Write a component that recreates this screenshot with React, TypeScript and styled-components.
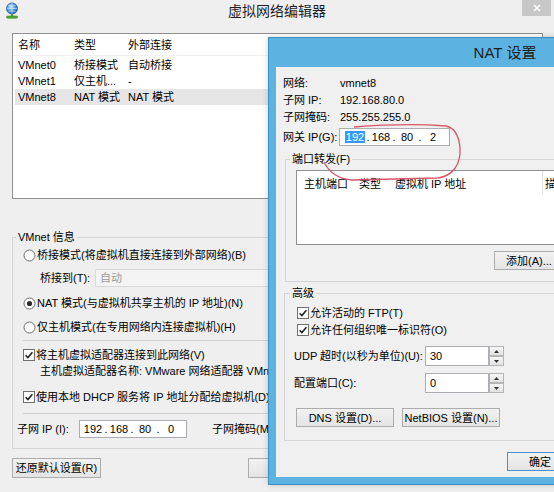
import React from "react";
import styled, { createGlobalStyle } from "styled-components";

const GlobalStyle = createGlobalStyle`
  html, body { margin: 0; padding: 0; background: #efefef; }
  body {
    font-family: "Liberation Sans", "Noto Sans CJK SC", sans-serif;
    font-size: 11px;
    color: #000;
  }
  * { box-sizing: border-box; }
`;

const Screen = styled.div`
  position: relative;
  width: 554px;
  height: 492px;
  overflow: hidden;
  background: #efefef;
`;

/* ---------- main window ---------- */
const MainWindow = styled.div`
  display: flex;
  flex-direction: column;
  height: 100%;
`;

const TitleBar = styled.div`
  height: 24px;
  display: grid;
  grid-template-columns: 1fr auto 1fr;
  align-items: start;
`;

const AppIcon = styled.svg`
  margin: 2px 0 0 4px;
`;

const TitleText = styled.div<{ $size: number }>`
  font-size: ${(p) => p.$size}px;
  line-height: 22px;
  color: #1e1e1e;
  white-space: nowrap;
`;

const CloseButton = styled.div`
  justify-self: end;
  margin-right: 3px;
  width: 29px;
  height: 16px;
  background: #c7c7c7;
  display: flex;
  align-items: center;
  justify-content: center;
`;

const Client = styled.div`
  display: flex;
  flex-direction: column;
  padding: 9px 11px 0 12px;
`;

const ListBox = styled.div`
  height: 166px;
  flex: none;
  background: #fff;
  border: 1px solid #8f9090;
  display: flex;
  flex-direction: column;
`;

const ListHeader = styled.div`
  display: flex;
  height: 22px;
  flex: none;
  align-items: center;
  padding: 1px 0 0 5px;
  border-bottom: 1px solid #f0f0f0;
`;

const ListRows = styled.div`
  padding-top: 1px;
  display: flex;
  flex-direction: column;
`;

const ListRow = styled.div<{ $selected?: boolean }>`
  display: flex;
  height: 16px;
  align-items: center;
  margin-left: 2px;
  padding: 1px 0 0 3px;
  background: ${(p) => (p.$selected ? "#e6e6e6" : "transparent")};
`;

const Cell = styled.div<{ $w?: number }>`
  width: ${(p) => (p.$w ? `${p.$w}px` : "auto")};
  flex: ${(p) => (p.$w ? "none" : "1")};
  white-space: nowrap;
  overflow: hidden;
  line-height: 15px;
`;

const Group = styled.fieldset<{ $mt: number; $ml?: number; $mr?: number }>`
  margin: ${(p) => p.$mt}px ${(p) => p.$mr ?? 0}px 0 ${(p) => p.$ml ?? 0}px;
  padding: 0;
  border: 1px solid #d5d5d5;
  min-width: 0;
`;

const Legend = styled.legend<{ $ml: number }>`
  padding: 1px 2px 0;
  margin-left: ${(p) => p.$ml}px;
  line-height: 15px;
  white-space: nowrap;
`;

const GroupBody = styled.div<{ $pad: string }>`
  display: flex;
  flex-direction: column;
  padding: ${(p) => p.$pad};
`;

const OptionRow = styled.div<{ $h: number; $mt?: number; $pl?: number }>`
  display: flex;
  align-items: center;
  height: ${(p) => p.$h}px;
  margin-top: ${(p) => p.$mt ?? 0}px;
  padding-left: ${(p) => p.$pl ?? 0}px;
  white-space: nowrap;
  line-height: ${(p) => Math.min(p.$h, 15)}px;
`;

const OptionText = styled.span`
  padding-top: 1px;
`;

const Separator = styled.div<{ $mt: number }>`
  height: 1px;
  margin: ${(p) => p.$mt}px 0 0 6px;
  background: #d0d0d0;
`;

const Label = styled.span<{ $w?: number; $ml?: number }>`
  display: inline-block;
  width: ${(p) => (p.$w ? `${p.$w}px` : "auto")};
  margin-left: ${(p) => p.$ml ?? 0}px;
  padding-top: 1px;
  flex: none;
  white-space: nowrap;
`;

const DropDown = styled.div`
  height: 18px;
  width: 440px;
  flex: none;
  border: 1px solid #d9d9d9;
  background: #f4f4f4;
  color: #9a9a9a;
  padding: 1px 0 0 4px;
  display: flex;
  align-items: center;
`;

const TextBox = styled.div<{ $w: number; $h: number }>`
  width: ${(p) => p.$w}px;
  height: ${(p) => p.$h}px;
  flex: none;
  border: 1px solid #abadb3;
  background: #fff;
  display: flex;
  align-items: center;
  padding-left: 4px;
`;

const IpBox = styled.div<{ $w: number; $pl: number }>`
  width: ${(p) => p.$w}px;
  height: 18px;
  flex: none;
  border: 1px solid #abadb3;
  background: #fff;
  display: flex;
  align-items: center;
  padding-left: ${(p) => p.$pl}px;
`;

const IpField = styled.span`
  width: 22px;
  flex: none;
  text-align: center;
  line-height: 13px;
`;

const IpDot = styled.span`
  width: 4px;
  flex: none;
  text-align: center;
  line-height: 13px;
`;

const Selected = styled.span`
  background: #3399ff;
  color: #fff;
  padding: 0 1px;
`;

const Button = styled.div<{ $w: number; $h?: number; $default?: boolean }>`
  width: ${(p) => p.$w}px;
  height: ${(p) => p.$h ?? 19}px;
  flex: none;
  border: 1px solid ${(p) => (p.$default ? "#4a8fc7" : "#acacac")};
  background: linear-gradient(#f2f2f2, #e4e4e4);
  display: flex;
  align-items: center;
  justify-content: center;
  white-space: nowrap;
  line-height: 15px;
  padding-top: 1px;
`;

const ButtonRow = styled.div<{ $mt: number; $gap: number; $justify?: string; $pl?: number; $pr?: number }>`
  display: flex;
  gap: ${(p) => p.$gap}px;
  margin-top: ${(p) => p.$mt}px;
  justify-content: ${(p) => p.$justify ?? "flex-start"};
  padding-left: ${(p) => p.$pl ?? 0}px;
  padding-right: ${(p) => p.$pr ?? 0}px;
`;

const MainButtons = styled.div`
  display: flex;
  justify-content: space-between;
  margin-top: 9px;
`;

const BoxGlyph = styled.svg`
  flex: none;
  margin-right: 1px;
`;

/* ---------- NAT dialog ---------- */
const NatWindow = styled.div`
  position: absolute;
  left: 268px;
  top: 37px;
  width: 474px;
  height: 448px;
  background: #5cb3e2;
  border: 1px solid #3f8fc4;
  display: flex;
  flex-direction: column;
  box-shadow: 0 0 6px rgba(0, 0, 0, 0.18);
`;

const NatTitle = styled.div`
  height: 29px;
  flex: none;
  display: flex;
  justify-content: center;
  align-items: center;
`;

const NatClient = styled.div`
  flex: 1;
  margin: 0 7px 7px 7px;
  background: #f0f0f0;
  display: flex;
  flex-direction: column;
  padding: 7px 0 0 7px;
`;

const InfoRow = styled.div<{ $h: number; $mt?: number }>`
  display: flex;
  align-items: center;
  height: ${(p) => p.$h}px;
  margin-top: ${(p) => p.$mt ?? 0}px;
  white-space: nowrap;
  line-height: 15px;
`;

const PortList = styled.div`
  height: 75px;
  background: #fff;
  border: 1px solid #8f9090;
`;

const PortHeader = styled.div`
  display: flex;
  height: 23px;
  padding-left: 7px;
`;

const PortHead = styled.div<{ $w?: number; $sep?: boolean }>`
  width: ${(p) => (p.$w ? `${p.$w}px` : "auto")};
  flex: ${(p) => (p.$w ? "none" : "1")};
  display: flex;
  align-items: center;
  padding: 1px 0 0 ${(p) => (p.$w ? 0 : 2)}px;
  border-right: 1px solid ${(p) => (p.$sep ? "#e3e3e3" : "transparent")};
  white-space: nowrap;
`;

const Spinner = styled.div`
  width: 15px;
  height: 20px;
  flex: none;
  display: flex;
  flex-direction: column;
`;

const SpinButton = styled.div`
  flex: 1;
  border: 1px solid #b5b5b5;
  background: linear-gradient(#f6f6f6, #e2e2e2);
  display: flex;
  align-items: center;
  justify-content: center;
`;

const Overlay = styled.svg`
  position: absolute;
  left: 0;
  top: 0;
  pointer-events: none;
`;

/* ---------- small drawings ---------- */
const Radio = ({ on }: { on?: boolean }) => (
  <BoxGlyph width="13" height="13" viewBox="0 0 13 13">
    <circle cx="6.5" cy="6.5" r="5.5" fill="#fdfdfd" stroke="#6f6f6f" />
    {on && <circle cx="6.5" cy="6.5" r="2.6" fill="#2b2b2b" />}
  </BoxGlyph>
);

const Check = () => (
  <BoxGlyph width="12" height="12" viewBox="0 0 12 12">
    <rect x="0.5" y="0.5" width="11" height="11" fill="#fdfdfd" stroke="#6f6f6f" />
    <path d="M2.6 6.2 L4.9 8.5 L9.4 3.2" fill="none" stroke="#222" strokeWidth="1.6" />
  </BoxGlyph>
);

const Arrow = ({ up }: { up?: boolean }) => (
  <svg width="5" height="3" viewBox="0 0 5 3">
    <path d={up ? "M0 3 L2.5 0 L5 3 Z" : "M0 0 L2.5 3 L5 0 Z"} fill="#333" />
  </svg>
);

const Ip = ({ parts, w, pl, sel }: { parts: string[]; w: number; pl: number; sel?: boolean }) => (
  <IpBox $w={w} $pl={pl}>
    {parts.map((p, i) => (
      <React.Fragment key={i}>
        {i > 0 && <IpDot>.</IpDot>}
        <IpField>{i === 0 && sel ? <Selected>{p}</Selected> : p}</IpField>
      </React.Fragment>
    ))}
  </IpBox>
);

export default function App() {
  return (
    <Screen>
      <GlobalStyle />
      <MainWindow>
        <TitleBar>
          <AppIcon width="16" height="17" viewBox="0 0 16 17">
            <defs>
              <radialGradient id="gl" cx="0.4" cy="0.35" r="0.7">
                <stop offset="0" stopColor="#bfe6ff" />
                <stop offset="0.6" stopColor="#3f8fd6" />
                <stop offset="1" stopColor="#1d5ea8" />
              </radialGradient>
            </defs>
            <circle cx="8" cy="6.5" r="5.5" fill="url(#gl)" stroke="#2a5d96" strokeWidth="0.8" />
            <path d="M3 6.5 H13 M8 1 V12 M4.5 3.5 Q8 5 11.5 3.5 M4.5 9.5 Q8 8 11.5 9.5" stroke="#d8efff" strokeWidth="0.6" fill="none" />
            <rect x="7.2" y="12" width="1.6" height="2" fill="#3c7a2a" />
            <rect x="2.5" y="14" width="11" height="2.2" rx="1" fill="#4fae35" stroke="#2f7d1e" strokeWidth="0.6" />
          </AppIcon>
          <TitleText $size={14}>虚拟网络编辑器</TitleText>
          <CloseButton>
            <svg width="8" height="8" viewBox="0 0 8 8">
              <path d="M1 1 L7 7 M7 1 L1 7" stroke="#fff" strokeWidth="1.6" />
            </svg>
          </CloseButton>
        </TitleBar>

        <Client>
          <ListBox>
            <ListHeader>
              <Cell $w={56}>名称</Cell>
              <Cell $w={54}>类型</Cell>
              <Cell>外部连接</Cell>
            </ListHeader>
            <ListRows>
              <ListRow>
                <Cell $w={56}>VMnet0</Cell>
                <Cell $w={54}>桥接模式</Cell>
                <Cell>自动桥接</Cell>
              </ListRow>
              <ListRow>
                <Cell $w={56}>VMnet1</Cell>
                <Cell $w={54}>仅主机...</Cell>
                <Cell>-</Cell>
              </ListRow>
              <ListRow $selected>
                <Cell $w={56}>VMnet8</Cell>
                <Cell $w={54}>NAT 模式</Cell>
                <Cell>NAT 模式</Cell>
              </ListRow>
            </ListRows>
          </ListBox>

          <Group $mt={30}>
            <Legend $ml={3}>VMnet 信息</Legend>
            <GroupBody $pad="0 0 10px 4px">
              <OptionRow $h={20} $pl={6}>
                <Radio />
                <OptionText>桥接模式(将虚拟机直接连接到外部网络)(B)</OptionText>
              </OptionRow>
              <OptionRow $h={26} $pl={23}>
                <Label $w={55}>桥接到(T):</Label>
                <DropDown>自动</DropDown>
              </OptionRow>
              <OptionRow $h={24} $pl={6}>
                <Radio on />
                <OptionText>NAT 模式(与虚拟机共享主机的 IP 地址)(N)</OptionText>
              </OptionRow>
              <OptionRow $h={24} $pl={6}>
                <Radio />
                <OptionText>仅主机模式(在专用网络内连接虚拟机)(H)</OptionText>
              </OptionRow>
              <Separator $mt={1} />
              <OptionRow $h={18} $mt={5} $pl={6}>
                <Check />
                <OptionText>将主机虚拟适配器连接到此网络(V)</OptionText>
              </OptionRow>
              <OptionRow $h={13} $pl={23}>
                <OptionText>主机虚拟适配器名称: VMware 网络适配器 VMnet8</OptionText>
              </OptionRow>
              <OptionRow $h={20} $mt={10} $pl={6}>
                <Check />
                <OptionText>使用本地 DHCP 服务将 IP 地址分配给虚拟机(D)</OptionText>
              </OptionRow>
              <Separator $mt={6} />
              <OptionRow $h={18} $mt={6}>
                <Label $w={62}>子网 IP (I):</Label>
                <Ip parts={["192", "168", "80", "0"]} w={108} pl={2} />
                <Label $ml={25}>子网掩码(M):</Label>
              </OptionRow>
            </GroupBody>
          </Group>

          <MainButtons>
            <Button $w={89} $h={20}>
              还原默认设置(R)
            </Button>
            <ButtonRow $mt={0} $gap={5}>
              <Button $w={70} $h={20}>确定</Button>
              <Button $w={70} $h={20}>取消</Button>
              <Button $w={70} $h={20}>应用(A)</Button>
              <Button $w={70} $h={20}>帮助</Button>
            </ButtonRow>
          </MainButtons>
        </Client>
      </MainWindow>

      <NatWindow>
        <NatTitle>
          <TitleText $size={15}>NAT 设置</TitleText>
        </NatTitle>
        <NatClient>
          <InfoRow $h={17}>
            <Label $w={57}>网络:</Label>
            <Label>vmnet8</Label>
          </InfoRow>
          <InfoRow $h={17}>
            <Label $w={57}>子网 IP:</Label>
            <Label>192.168.80.0</Label>
          </InfoRow>
          <InfoRow $h={17}>
            <Label $w={57}>子网掩码:</Label>
            <Label>255.255.255.0</Label>
          </InfoRow>
          <InfoRow $h={20} $mt={2}>
            <Label $w={56}>网关 IP(G):</Label>
            <Ip parts={["192", "168", "80", "2"]} w={111} pl={4} sel />
          </InfoRow>

          <Group $mt={4} $ml={2} $mr={9}>
            <Legend $ml={4}>端口转发(F)</Legend>
            <GroupBody $pad="3px 10px 11px 10px">
              <PortList>
                <PortHeader>
                  <PortHead $w={55}>主机端口</PortHead>
                  <PortHead $w={36}>类型</PortHead>
                  <PortHead $w={148} $sep>
                    虚拟机 IP 地址
                  </PortHead>
                  <PortHead>描述</PortHead>
                </PortHeader>
              </PortList>
              <ButtonRow $mt={6} $gap={5} $justify="flex-end">
                <Button $w={70}>添加(A)...</Button>
                <Button $w={70}>移除(R)</Button>
                <Button $w={70}>属性(P)</Button>
              </ButtonRow>
            </GroupBody>
          </Group>

          <Group $mt={3} $ml={1} $mr={9}>
            <Legend $ml={5}>高级</Legend>
            <GroupBody $pad="3px 0 13px 9px">
              <OptionRow $h={17} $pl={3}>
                <Check />
                <OptionText>允许活动的 FTP(T)</OptionText>
              </OptionRow>
              <OptionRow $h={17} $pl={3}>
                <Check />
                <OptionText>允许任何组织唯一标识符(O)</OptionText>
              </OptionRow>
              <OptionRow $h={20} $mt={8}>
                <Label $w={131}>UDP 超时(以秒为单位)(U):</Label>
                <TextBox $w={64} $h={20}>30</TextBox>
                <Spinner>
                  <SpinButton>
                    <Arrow up />
                  </SpinButton>
                  <SpinButton>
                    <Arrow />
                  </SpinButton>
                </Spinner>
              </OptionRow>
              <OptionRow $h={20} $mt={7}>
                <Label $w={131}>配置端口(C):</Label>
                <TextBox $w={64} $h={20}>0</TextBox>
                <Spinner>
                  <SpinButton>
                    <Arrow up />
                  </SpinButton>
                  <SpinButton>
                    <Arrow />
                  </SpinButton>
                </Spinner>
              </OptionRow>
              <ButtonRow $mt={15} $gap={8} $pl={2}>
                <Button $w={98}>DNS 设置(D)...</Button>
                <Button $w={98}>NetBIOS 设置(N)...</Button>
              </ButtonRow>
            </GroupBody>
          </Group>

          <ButtonRow $mt={11} $gap={6} $justify="flex-end" $pr={17}>
            <Button $w={66} $default>确定</Button>
            <Button $w={66}>取消</Button>
            <Button $w={66}>帮助</Button>
          </ButtonRow>
        </NatClient>
      </NatWindow>

      <Overlay width="554" height="492" viewBox="0 0 554 492">
        <path
          d="M324 162 C329 172 338 179 352 180 L438 178 C453 176 461 164 460 148 C459 136 455 128 446 126 C420 124 380 125 354 127"
          fill="none"
          stroke="#d8566a"
          strokeWidth="1.3"
        />
      </Overlay>
    </Screen>
  );
}
